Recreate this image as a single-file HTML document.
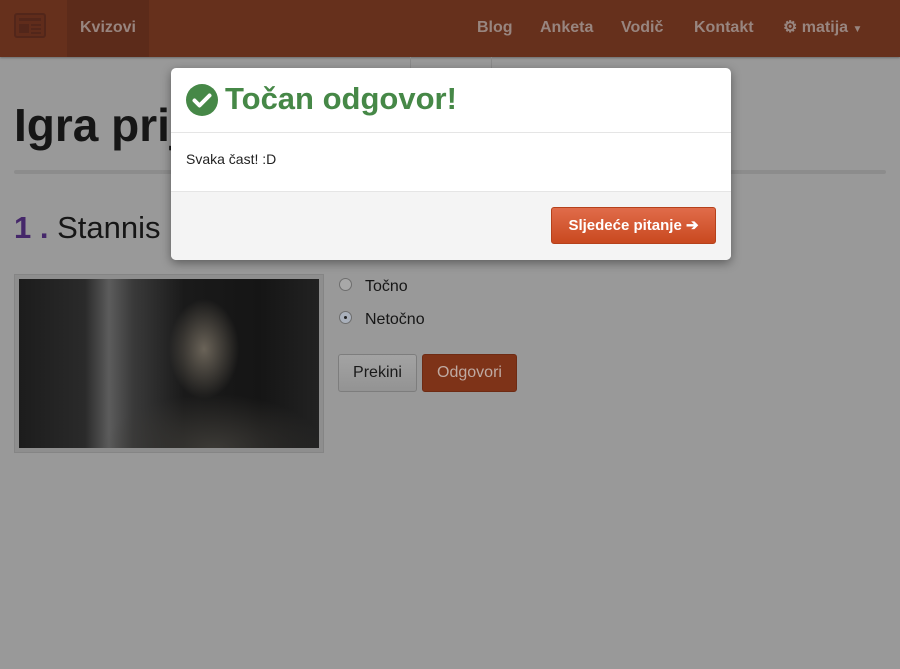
<!DOCTYPE html>
<html><head><meta charset="utf-8"><style>
*{margin:0;padding:0;box-sizing:border-box}
body{width:900px;height:669px;background:#999;font-family:"Liberation Sans",sans-serif;position:relative;overflow:hidden}
.nav{position:absolute;left:0;top:0;width:900px;height:57px;background:#66301c;box-shadow:0 1px 2px rgba(0,0,0,.3)}
.nav .a{position:absolute;top:0;height:57px;line-height:55px;font-size:16px;font-weight:bold;color:#98857f}
.ab{position:absolute;left:14px;top:13px;width:32px;height:25px;border:2px solid #52261a;border-radius:3px;background:#602c1b}
.ab i{position:absolute;background:#52261a}
h1{position:absolute;left:14px;top:98px;font-size:46px;font-weight:bold;color:#161616}
.hr{position:absolute;left:14px;top:170px;width:872px;height:4px;background:#8c8c8c;border-radius:2px}
.q{position:absolute;left:14px;top:210px;font-size:31px;color:#161616}
.q b{color:#45276a}
.img{position:absolute;left:14px;top:274px;width:310px;height:179px;border:1px solid #858585;background:#8e8e8e;padding:4px}
.img div{width:300px;height:169px;background:radial-gradient(ellipse 35px 50px at 185px 70px,#6a6358,rgba(0,0,0,0) 100%),radial-gradient(ellipse 110px 55px at 195px 170px,#3c3a36,rgba(0,0,0,0) 100%),linear-gradient(90deg,#1c1c1c 0,#2a2a2a 22%,#5c5c5c 30%,#3a3a3a 38%,#1a1a1a 55%,#151515 80%,#222 100%)}
.r{position:absolute;left:339px;width:13px;height:13px;border-radius:50%;border:1px solid #6e6e6e;background:#a8a8a8}
.lbl{position:absolute;left:365px;font-size:16px;color:#161616}
.btn{position:absolute;top:354px;height:38px;line-height:36px;font-size:16px;border-radius:3px;text-align:center}
.modal{position:absolute;left:171px;top:68px;width:560px;height:192px;background:#fff;border-radius:5px;box-shadow:0 3px 10px rgba(0,0,0,.4);overflow:hidden}
.mh{height:65px;border-bottom:1px solid #e5e5e5;position:relative}
.mh span{position:absolute;left:54px;top:13px;font-size:31px;font-weight:bold;color:#468847}
.mb{height:59px;border-bottom:1px solid #e5e5e5;padding:18px 15px;font-size:14px;color:#222}
.mf{height:68px;background:#f4f4f4;position:relative}
.nb{position:absolute;left:380px;top:15px;width:165px;height:37px;border-radius:3px;border:1px solid #b5411b;background:linear-gradient(#e06c4a,#c9491f);color:#fff;font-size:15px;font-weight:bold;line-height:35px;text-align:center}
</style></head><body>
<div class="nav">
<div class="ab"><i style="left:3px;top:3px;width:22px;height:3px"></i><i style="left:3px;top:9px;width:10px;height:9px"></i><i style="left:15px;top:9px;width:10px;height:2px"></i><i style="left:15px;top:13px;width:10px;height:2px"></i><i style="left:15px;top:17px;width:10px;height:2px"></i></div>
<div class="a" style="left:67px;width:82px;background:#5c2b1a;text-align:center">Kvizovi</div>
<div class="a" style="left:477px">Blog</div>
<div class="a" style="left:540px">Anketa</div>
<div class="a" style="left:621px">Vodič</div>
<div class="a" style="left:694px">Kontakt</div>
<div class="a" style="left:783px">⚙ matija <span style="font-size:10px">▼</span></div>
</div>
<div style="position:absolute;left:410px;top:57px;width:82px;height:12px;border-left:1px solid #8a8a8a;border-right:1px solid #8a8a8a"></div>
<h1>Igra prij</h1>
<div class="hr"></div>
<div class="q"><b>1 .</b> Stannis</div>
<div class="img"><div></div></div>
<div class="r" style="top:278px"></div>
<div class="r" style="top:311px;background:#a9b0bb"><div style="position:absolute;left:4px;top:4px;width:3px;height:3px;border-radius:50%;background:#222"></div></div>
<div class="lbl" style="top:278px">Točno</div>
<div class="lbl" style="top:311px">Netočno</div>
<div class="btn" style="left:338px;width:79px;background:linear-gradient(#a3a3a3,#939393);border:1px solid #7d7d7d;color:#1a1a1a">Prekini</div>
<div class="btn" style="left:422px;width:95px;background:#7e3318;border:1px solid #6e2b14;color:#bfaaa2">Odgovori</div>
<div class="modal">
<div class="mh"><svg style="position:absolute;left:15px;top:16px" width="32" height="32" viewBox="0 0 32 32"><circle cx="16" cy="16" r="16" fill="#468847"/><path d="M8.5 16.5l5 5 10-10" stroke="#fff" stroke-width="4" fill="none" stroke-linecap="round" stroke-linejoin="round"/></svg><span>Točan odgovor!</span></div>
<div class="mb">Svaka čast! :D</div>
<div class="mf"><div class="nb">Sljedeće pitanje ➔</div></div>
</div>
</body></html>
